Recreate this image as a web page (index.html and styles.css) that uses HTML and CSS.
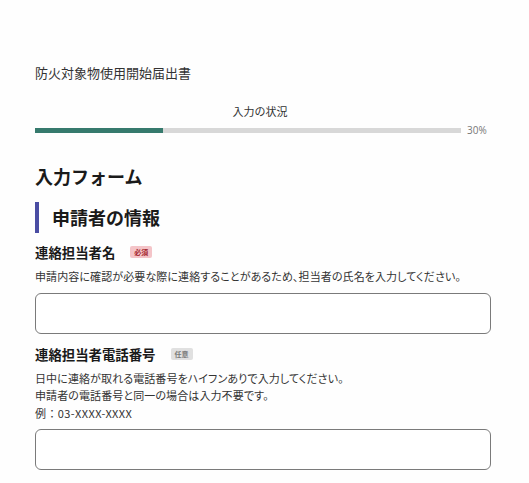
FILE: index.html
```html
<!DOCTYPE html>
<html lang="ja">
<head>
<meta charset="utf-8">
<title>防火対象物使用開始届出書</title>
<link rel="stylesheet" href="styles.css">
</head>
<body>
<main class="page">
  <p class="doc-title">防火対象物使用開始届出書</p>
  <div class="progress">
    <div class="progress-label">入力の状況</div>
    <div class="progress-row">
      <div class="track"><div class="fill" style="width:30%"></div></div>
      <span class="pct">30%</span>
    </div>
  </div>
  <h1 class="form-title">入力フォーム</h1>
  <h2 class="section-title">申請者の情報</h2>
  <div class="field">
    <div class="label-row"><span class="label">連絡担当者名</span><span class="badge badge-req">必須</span></div>
    <p class="help">申請内容に確認が必要な際に連絡することがあるため、担当者の氏名を入力してください。</p>
    <input class="text-input" type="text">
  </div>
  <div class="field">
    <div class="label-row"><span class="label">連絡担当者電話番号</span><span class="badge badge-opt">任意</span></div>
    <p class="help">日中に連絡が取れる電話番号をハイフンありで入力してください。<br>申請者の電話番号と同一の場合は入力不要です。<br><span class="example">例：03-XXXX-XXXX</span></p>
    <input class="text-input" type="text">
  </div>
</main>
</body>
</html>
```
FILE: styles.css
```css
html, body {
  margin: 0;
  padding: 0;
  background: #fefefe;
}
body {
  font-family: "Noto Sans CJK JP", "Noto Sans", sans-serif;
  color: #1a1a1a;
}
.page {
  width: 456px;
  margin: 0 0 0 35px;
  padding-top: 63px;
}
.doc-title {
  margin: 0;
  font-size: 13px;
  line-height: 20px;
  color: #333;
}
.progress {
  margin-top: 20px;
}
.progress-label {
  text-align: center;
  padding-right: 6px;
  font-size: 11px;
  line-height: 16px;
  color: #333;
}
.progress-row {
  margin-top: 3px;
  display: flex;
  align-items: center;
  gap: 6px;
  height: 16px;
}
.track {
  flex: 1;
  height: 5px;
  background: #d8d8d8;
}
.fill {
  height: 100%;
  background: #367a6d;
}
.pct {
  width: 24px;
  font-family: "Open Sans", "Noto Sans", sans-serif;
  font-size: 10px;
  color: #777;
}
.form-title {
  margin: 25px 0 0;
  font-size: 18px;
  line-height: 26px;
  font-weight: bold;
}
.section-title {
  margin: 13px 0 0;
  border-left: 4px solid #4a4da3;
  padding-left: 13px;
  font-size: 18px;
  line-height: 31px;
  font-weight: bold;
}
.field {
  margin-top: 9px;
}
.field + .field {
  margin-top: 10px;
}
.label-row {
  display: flex;
  align-items: center;
  height: 20px;
}
.label {
  font-size: 13.4px;
  font-weight: bold;
  line-height: 20px;
}
.badge {
  margin-left: 15px;
  font-size: 7px;
  line-height: 12px;
  padding: 0 4px;
  border-radius: 2px;
  font-weight: bold;
}
.badge-req {
  background: #f4c4c8;
  color: #a3272e;
}
.badge-opt {
  background: #e0e0e0;
  color: #7a7a7a;
}
.help {
  margin: 6px 0 7px;
  font-size: 11px;
  line-height: 17.5px;
  letter-spacing: 0.1px;
  color: #333;
  font-feature-settings: "palt";
}
.example {
  font-feature-settings: normal;
  letter-spacing: 0.4px;
}
.text-input {
  display: block;
  box-sizing: border-box;
  width: 100%;
  height: 41px;
  margin: 0;
  border: 1px solid #7a7a7a;
  border-radius: 6px;
  background: #fff;
  font: inherit;
}
```
